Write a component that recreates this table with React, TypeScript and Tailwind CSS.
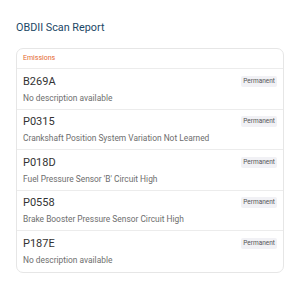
const codes = [
  { code: 'B269A', desc: 'No description available' },
  { code: 'P0315', desc: 'Crankshaft Position System Variation Not Learned' },
  { code: 'P018D', desc: "Fuel Pressure Sensor 'B' Circuit High" },
  { code: 'P0558', desc: 'Brake Booster Pressure Sensor Circuit High' },
  { code: 'P187E', desc: 'No description available' },
];

export default function App() {
  return (
    <div className="h-[300px] w-[300px] bg-white px-4 pt-[20px] font-['Roboto',sans-serif]">
      <h1 className="text-[10.8px] leading-[16px] text-[#1b4766]">OBDII Scan Report</h1>
      <div className="mt-[12px] overflow-hidden rounded-[7px] border border-[#e6e6e6]">
        <div className="flex h-[20px] items-center border-b border-[#ececec] px-[6px] text-[7px] text-[#e4672f]">
          Emissions
        </div>
        {codes.map((c, i) => (
          <div
            key={c.code}
            className={`flex h-[40.5px] flex-col justify-center px-[6px] ${i < codes.length - 1 ? 'border-b border-[#ececec]' : ''}`}
          >
            <div className="flex items-center justify-between">
              <span className="text-[11px] leading-[15px] text-[#333]">{c.code}</span>
              <span className="rounded-[2px] bg-[#f1f1f5] px-[2px] text-[6.5px] leading-[11px] text-[#555]">
                Permanent
              </span>
            </div>
            <div className="mt-[3px] text-[8.4px] leading-[12px] text-[#6e6e6e]">{c.desc}</div>
          </div>
        ))}
      </div>
    </div>
  );
}
